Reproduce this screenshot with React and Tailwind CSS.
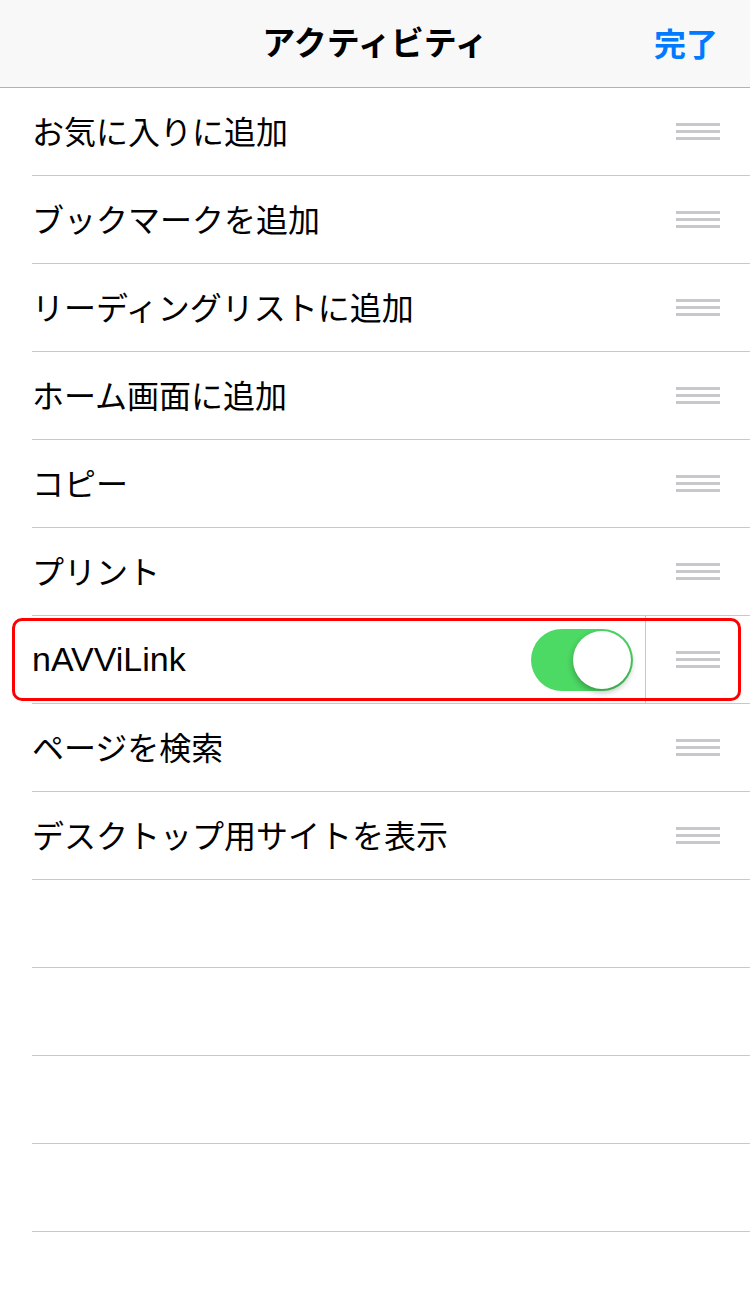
import React from 'react';

const jp = { fontFamily: '"Noto Sans CJK JP", "Noto Sans", sans-serif' };

const items = [
  'お気に入りに追加',
  'ブックマークを追加',
  'リーディングリストに追加',
  'ホーム画面に追加',
  'コピー',
  'プリント',
  'nAVViLink',
  'ページを検索',
  'デスクトップ用サイトを表示',
];

const Handle = () => (
  <div className="flex flex-col gap-[4px] w-[44px]">
    <div className="h-[3px] bg-[#c7c7cc]" />
    <div className="h-[3px] bg-[#c7c7cc]" />
    <div className="h-[3px] bg-[#c7c7cc]" />
  </div>
);

const Toggle = () => (
  <div className="w-[102px] h-[62px] rounded-full bg-[#4cd964] flex items-center justify-end pr-[2px]">
    <div className="w-[58px] h-[58px] rounded-full bg-white shadow-[0_3px_6px_rgba(0,0,0,0.3)]" />
  </div>
);

const Row = ({ label }) => {
  const isLink = label === 'nAVViLink';
  return (
    <div className="pl-[32px]">
      <div className="relative h-[88px] border-b border-[#c8c7cc] flex items-center">
        <span
          className={`flex-1 text-black ${isLink ? 'text-[34px]' : 'text-[32px] mb-[4px]'}`}
          style={isLink ? { fontFamily: '"Liberation Sans", Arial, sans-serif' } : jp}
        >
          {label}
        </span>
        {isLink && (
          <div className="flex items-center h-full">
            <Toggle />
            <div className="ml-[12px] h-full w-px bg-[#c8c7cc]" />
          </div>
        )}
        <div className={`${isLink ? 'ml-[30px]' : ''} mr-[30px]`}>
          <Handle />
        </div>
      </div>
    </div>
  );
};

export default function App() {
  return (
    <div className="w-[750px] h-[1294px] bg-white overflow-hidden" style={jp}>
      <header className="relative h-[88px] bg-[#f8f8f8] border-b border-[#b2b2b2] flex items-center justify-center">
        <h1 className="text-[33px] font-bold text-black mb-[3px]">アクティビティ</h1>
        <button className="absolute right-[32px] text-[32px] font-bold text-[#007aff] mb-[3px]">完了</button>
      </header>
      <div className="relative">
        {items.map((label) => (
          <Row key={label} label={label} />
        ))}
        {[0, 1, 2, 3].map((i) => (
          <div key={i} className="pl-[32px]">
            <div className="h-[88px] border-b border-[#c8c7cc]" />
          </div>
        ))}
        <div className="absolute left-[12px] top-[530px] w-[729px] h-[83px] rounded-[10px] border-[3px] border-[#ff0000] pointer-events-none" />
      </div>
    </div>
  );
}
